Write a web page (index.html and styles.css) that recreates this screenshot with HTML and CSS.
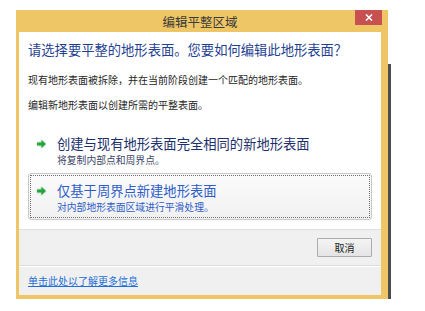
FILE: index.html
```html
<!DOCTYPE html>
<html lang="zh-CN">
<head>
    <meta charset="UTF-8">
    <title>编辑平整区域</title>
    <link rel="stylesheet" href="styles.css">
</head>
<body>
    <div class="escritorio">
        <div class="ventana">
            <div class="titulo">
                <span>编辑平整区域</span>
                <button class="cerrar">
                    <svg width="8" height="7" viewBox="0 0 8 7"><path d="M1 0.5 L7 6.5 M7 0.5 L1 6.5" stroke="#ffffff" stroke-width="1.6"/></svg>
                </button>
            </div>
            <div class="contenido">
                <h1 class="pregunta">请选择要平整的地形表面。您要如何编辑此地形表面？</h1>
                <p class="texto">现有地形表面被拆除，并在当前阶段创建一个匹配的地形表面。</p>
                <p class="texto segundo">编辑新地形表面以创建所需的平整表面。</p>

                <div class="opciones">
                    <div class="opcion">
                        <svg class="flecha" width="11" height="10" viewBox="0 0 9 9"><path d="M0.5 3.2 H4.4 V0.6 L8.5 4.5 L4.4 8.4 V5.8 H0.5 Z" fill="#22a83a"/></svg>
                        <div>
                            <div class="opcion-titulo">创建与现有地形表面完全相同的新地形表面</div>
                            <div class="opcion-sub">将复制内部点和周界点。</div>
                        </div>
                    </div>
                    <div class="opcion activa">
                        <svg class="flecha" width="11" height="10" viewBox="0 0 9 9"><path d="M0.5 3.2 H4.4 V0.6 L8.5 4.5 L4.4 8.4 V5.8 H0.5 Z" fill="#22a83a"/></svg>
                        <div>
                            <div class="opcion-titulo">仅基于周界点新建地形表面</div>
                            <div class="opcion-sub">对内部地形表面区域进行平滑处理。</div>
                        </div>
                    </div>
                </div>
            </div>
            <div class="pie">
                <div class="botones">
                    <button class="boton">取消</button>
                </div>
                <div class="enlace-fila">
                    <a href="#" class="enlace">单击此处以了解更多信息</a>
                </div>
            </div>
        </div>
        <div class="sombra"></div>
    </div>
</body>
</html>
```

FILE: styles.css
```css
body {
    margin: 0;
    background-color: #ffffff;
    font-family: "Noto Sans CJK SC", "Noto Sans", sans-serif;
}
.escritorio {
    display: flex;
    align-items: flex-start;
    padding: 10px 0 0 16px;
}
.ventana {
    width: 372px;
    height: 289px;
    box-sizing: border-box;
    background-color: #efc665;
    padding: 0 7px 4px 3px;
    display: flex;
    flex-direction: column;
}
.sombra {
    width: 3px;
    height: 235px;
    margin-top: 54px;
    background-color: #4b4d50;
}
.titulo {
    height: 22px;
    display: flex;
    align-items: center;
    justify-content: center;
    position: relative;
    font-size: 12.5px;
    color: #3a3a3a;
}
.cerrar {
    position: absolute;
    top: 0;
    right: -1px;
    width: 27px;
    height: 15px;
    border: none;
    padding: 0;
    background-color: #c75050;
    display: flex;
    align-items: center;
    justify-content: center;
}
.contenido {
    background-color: #ffffff;
    padding: 9px 9px 9px 9px;
}
.pregunta {
    margin: 0;
    font-size: 13.3px;
    font-weight: normal;
    line-height: 18px;
    color: #1f3f91;
}
.texto {
    margin: 14px 0 0 0;
    font-size: 10px;
    line-height: 14px;
    color: #262626;
}
.texto.segundo {
    margin-top: 11px;
}
.opciones {
    margin-top: 14px;
}
.opcion {
    height: 47px;
    box-sizing: border-box;
    display: flex;
    align-items: flex-start;
    padding: 8px 0 0 7px;
    border: 1px solid transparent;
    border-radius: 3px;
}
.opcion.activa {
    border-color: #c9c9c9;
    background: linear-gradient(#fbfbfb, #f1f1f1);
    outline: 1px dotted #6d6d6d;
    outline-offset: -3px;
}
.flecha {
    margin: 4px 10px 0 0;
    filter: drop-shadow(0 0 1px rgba(0, 0, 0, 0.25));
}
.opcion-titulo {
    font-size: 13.3px;
    line-height: 18px;
    color: #1c2f6b;
}
.opcion-sub {
    font-size: 9.8px;
    line-height: 14px;
    color: #3b4566;
}
.activa .opcion-titulo {
    color: #2e5cc8;
}
.activa .opcion-sub {
    color: #2e5cc8;
}
.pie {
    flex: 1;
    background-color: #f0f0f0;
    border-top: 1px solid #e0e0e0;
    display: flex;
    flex-direction: column;
}
.botones {
    display: flex;
    justify-content: flex-end;
    padding: 8px 9px 8px 0;
    border-bottom: 1px solid #dcdcdc;
    box-shadow: 0 1px 0 #ffffff;
}
.boton {
    width: 55px;
    height: 19px;
    padding: 0;
    font-family: "Noto Sans CJK SC", sans-serif;
    font-size: 10px;
    color: #222222;
    background: linear-gradient(#f4f4f4, #e4e4e4);
    border: 1px solid #acacac;
    border-radius: 1px;
}
.enlace-fila {
    flex: 1;
    display: flex;
    align-items: center;
    padding: 0 0 0 9px;
}
.enlace {
    font-size: 10px;
    color: #1f6fd8;
    text-decoration: underline;
}
```
